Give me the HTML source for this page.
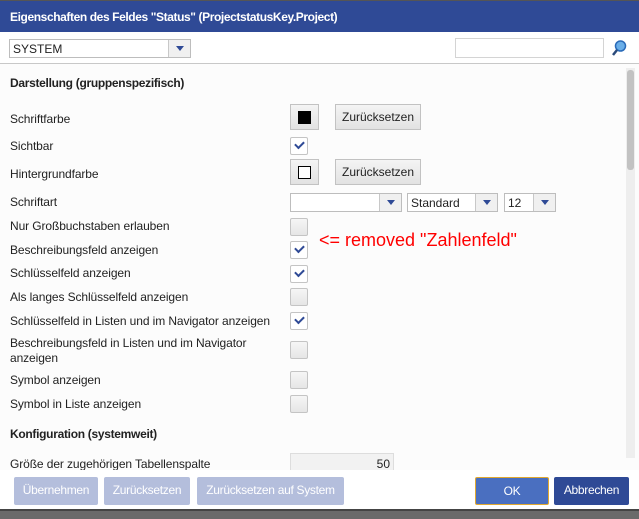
<!DOCTYPE html>
<html><head><meta charset="utf-8"><style>
*{box-sizing:border-box;margin:0;padding:0}
body{width:639px;height:519px;overflow:hidden;background:#fcfcfc;font-family:"Liberation Sans",sans-serif;font-size:12px;color:#222;position:relative}
.a{position:absolute}
.title{left:0;top:0;width:639px;height:32px;background:#2f4a96;color:#fff;font-weight:bold;font-size:12px;padding:9px 0 0 10px;border-top:1px solid #555;letter-spacing:-0.4px}
.top{left:0;top:32px;width:639px;height:32px;background:#fff;border-bottom:1px solid #c8c8c8}
.lbl{left:10px;white-space:nowrap;letter-spacing:-0.1px}
.cb{width:18px;height:18px;border:1px solid #c4c4c4;background:linear-gradient(#f6f6f6,#e6e6e6);border-radius:2px;left:290px}
.cb.on{background:#fff}
.cb.on::after{content:"";position:absolute;left:4px;top:3px;width:7px;height:4px;border-left:2px solid #2f4a96;border-bottom:2px solid #2f4a96;transform:rotate(-45deg)}
.btn{border:1px solid #c2c2c2;background:linear-gradient(#f4f4f4,#e2e2e2);text-align:center;font-size:12px}
.sel{border:1px solid #bdbdbd;background:#fff;height:19px;font-size:12px;padding:2px 3px}
.sel i{position:absolute;right:0;top:0;width:22px;height:17px;border-left:1px solid #c8c8c8;background:#f0f0f0}
.sel i::after{content:"";position:absolute;left:7px;top:6px;border-left:4px solid transparent;border-right:4px solid transparent;border-top:5px solid #2f4a96}
.h{font-weight:bold;font-size:12px;left:10px;letter-spacing:-0.3px}
.fb{height:28px;border-radius:2px;color:#fff;text-align:center;line-height:27px;font-size:12px;letter-spacing:-0.3px}
</style></head><body>
<div class="a title">Eigenschaften des Feldes "Status" (ProjectstatusKey.Project)</div>
<div class="a top"></div>
<div class="a sel" style="left:9px;top:39px;width:182px">SYSTEM<i></i></div>
<div class="a" style="left:455px;top:38px;width:149px;height:20px;border:1px solid #d4d4d4;background:#fff"></div>
<svg class="a" style="left:611px;top:39px" width="16" height="18"><circle cx="9.5" cy="7" r="5" fill="#6aaee8" stroke="#2a6ab8" stroke-width="1.5"/><line x1="6" y1="11" x2="2" y2="16" stroke="#2a4a7a" stroke-width="2.5"/></svg>
<div class="a" style="left:626px;top:68px;width:9px;height:390px;background:#eee"></div>
<div class="a" style="left:627px;top:70px;width:7px;height:100px;background:#c2c2c2;border-radius:3px"></div>
<div class="a h" style="top:76px">Darstellung (gruppenspezifisch)</div>
<div class="a lbl" style="top:112px">Schriftfarbe</div>
<div class="a btn" style="left:290px;top:104px;width:29px;height:26px"><div style="margin:6px auto;width:13px;height:13px;background:#000"></div></div>
<div class="a btn" style="left:335px;top:104px;width:86px;height:26px;line-height:24px">Zurücksetzen</div>
<div class="a lbl" style="top:139px">Sichtbar</div>
<div class="a cb on" style="top:137px"></div>
<div class="a lbl" style="top:167px">Hintergrundfarbe</div>
<div class="a btn" style="left:290px;top:159px;width:29px;height:26px"><div style="margin:6px auto;width:13px;height:13px;background:#fff;border:1px solid #000"></div></div>
<div class="a btn" style="left:335px;top:159px;width:86px;height:26px;line-height:24px">Zurücksetzen</div>
<div class="a lbl" style="top:195px">Schriftart</div>
<div class="a sel" style="left:290px;top:193px;width:112px"><i></i></div>
<div class="a sel" style="left:407px;top:193px;width:91px">Standard<i></i></div>
<div class="a sel" style="left:504px;top:193px;width:52px">12<i></i></div>
<div class="a lbl" style="top:219px">Nur Großbuchstaben erlauben</div><div class="a cb" style="top:218px"></div>
<div class="a lbl" style="top:243px">Beschreibungsfeld anzeigen</div><div class="a cb on" style="top:241px"></div>
<div class="a" style="left:319px;top:230px;color:#f00;font-family:'Liberation Sans',sans-serif;font-size:18px">&lt;= removed "Zahlenfeld"</div>
<div class="a lbl" style="top:266px">Schlüsselfeld anzeigen</div><div class="a cb on" style="top:265px"></div>
<div class="a lbl" style="top:290px">Als langes Schlüsselfeld anzeigen</div><div class="a cb" style="top:288px"></div>
<div class="a lbl" style="top:314px">Schlüsselfeld in Listen und im Navigator anzeigen</div><div class="a cb on" style="top:312px"></div>
<div class="a lbl" style="top:336px;line-height:15px">Beschreibungsfeld in Listen und im Navigator<br>anzeigen</div><div class="a cb" style="top:341px"></div>
<div class="a lbl" style="top:373px">Symbol anzeigen</div><div class="a cb" style="top:371px"></div>
<div class="a lbl" style="top:397px">Symbol in Liste anzeigen</div><div class="a cb" style="top:395px"></div>
<div class="a h" style="top:427px">Konfiguration (systemweit)</div>
<div class="a" style="left:0;top:453px;width:620px;height:17px;overflow:hidden">
<div class="a lbl" style="top:4px">Größe der zugehörigen Tabellenspalte</div>
<div class="a" style="left:290px;top:0;width:104px;height:20px;background:#f2f2f2;border:1px solid #ddd;text-align:right;padding:3px 3px">50</div></div>
<div class="a" style="left:0;top:470px;width:639px;height:40px;background:#fff"></div>
<div class="a fb" style="left:14px;top:477px;width:84px;background:#b4bedc">Übernehmen</div>
<div class="a fb" style="left:104px;top:477px;width:86px;background:#b4bedc">Zurücksetzen</div>
<div class="a fb" style="left:197px;top:477px;width:147px;background:#b4bedc">Zurücksetzen auf System</div>
<div class="a fb" style="left:475px;top:477px;width:74px;background:#4a6fc0;border:1px solid #e0a830">OK</div>
<div class="a fb" style="left:554px;top:477px;width:75px;background:#2f4a96">Abbrechen</div>
<div class="a" style="left:0;top:509px;width:639px;height:10px;background:#6a6a6a;border-top:2px solid #444"></div>
</body></html>
